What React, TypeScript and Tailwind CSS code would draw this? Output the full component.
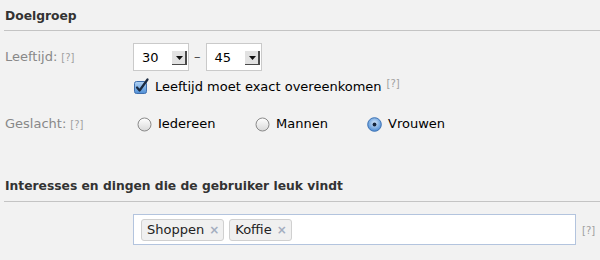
import React from 'react';

const font = { fontFamily: '"DejaVu Sans", "Liberation Sans", sans-serif' };

function Help({ className = '' }: { className?: string }) {
  return <span className={`text-[10px] text-[#a0a0a0] ${className}`}>[?]</span>;
}

function Select({ value }: { value: string }) {
  return (
    <div className="flex items-center w-[56px] h-[28px] bg-white border border-[#cacaca] pl-[8px] pr-[1px]">
      <span className="flex-1 text-[13px] leading-none text-black">{value}</span>
      <div className="relative w-[15px] h-[14px] bg-[#e2e2e2] border-r-2 border-b border-[#4a4a4a] mt-[1px]">
        <svg className="absolute left-[4px] top-[5px]" width="7" height="4" viewBox="0 0 7 4">
          <path d="M0 0h7L3.5 4z" fill="#111" />
        </svg>
      </div>
    </div>
  );
}

function Checkbox() {
  return (
    <svg width="15" height="16" viewBox="0 0 15 16">
      <defs>
        <linearGradient id="cb" x1="0" y1="0" x2="0" y2="1">
          <stop offset="0" stopColor="#b3d4f5" />
          <stop offset="1" stopColor="#4f8fd6" />
        </linearGradient>
      </defs>
      <rect x="0.5" y="3.5" width="12" height="12" rx="2" fill="url(#cb)" stroke="#3f6fae" />
      <path d="M3 9.5l2.6 3L13.5 1.5" fill="none" stroke="#1b2a40" strokeWidth="2.2" strokeLinecap="round" strokeLinejoin="round" />
    </svg>
  );
}

function Radio({ checked }: { checked?: boolean }) {
  if (checked) {
    return (
      <svg width="15" height="15" viewBox="0 0 15 15">
        <defs>
          <radialGradient id="rb" cx="0.5" cy="0.4" r="0.6">
            <stop offset="0" stopColor="#d6e9fb" />
            <stop offset="1" stopColor="#4a8ad3" />
          </radialGradient>
        </defs>
        <circle cx="7.5" cy="7.5" r="6.8" fill="url(#rb)" stroke="#3d72b4" />
        <circle cx="7.5" cy="7.5" r="1.9" fill="#15253c" />
      </svg>
    );
  }
  return (
    <svg width="15" height="15" viewBox="0 0 15 15">
      <defs>
        <linearGradient id="rg" x1="0" y1="0" x2="0" y2="1">
          <stop offset="0" stopColor="#ffffff" />
          <stop offset="1" stopColor="#d8d8d8" />
        </linearGradient>
      </defs>
      <circle cx="7.5" cy="7.5" r="6.5" fill="url(#rg)" stroke="#8a8a8a" />
    </svg>
  );
}

function Tag({ label }: { label: string }) {
  return (
    <span className="flex items-center h-[22px] pl-[5px] pr-[4px] gap-[5px] bg-[#f0f0f0] border border-[#d0d0d0] rounded-[3px] text-[13px] text-[#222]">
      {label}
      <span className="text-[12px] font-bold text-[#a3adbf]">×</span>
    </span>
  );
}

export default function App() {
  return (
    <div className="w-[600px] h-[260px] bg-[#f2f2f2] overflow-hidden" style={font}>
      <div className="h-[30px] pl-[5px] pt-[7px] text-[12.3px] leading-[18px] font-bold text-[#333]">Doelgroep</div>
      <div className="ml-[4px] h-px bg-[#c4c4c4]" />

      <div className="flex mt-[12px]">
        <div className="w-[133px] pl-[5px] h-[28px] flex items-center gap-[4px] text-[13px] text-[#888]">
          Leeftijd: <Help />
        </div>
        <div className="flex flex-col">
          <div className="flex items-center gap-[4px]">
            <Select value="30" />
            <span className="text-[13px] text-[#444] px-[1px]">–</span>
            <Select value="45" />
          </div>
          <div className="flex items-center h-[18px] mt-[6px] gap-[6px] pl-[1px]">
            <Checkbox />
            <span className="text-[13px] leading-none text-black">Leeftijd moet exact overeenkomen</span>
            <Help className="ml-[-1px] mb-[6px]" />
          </div>
        </div>
      </div>

      <div className="flex items-center h-[18px] mt-[20px]">
        <div className="w-[137px] pl-[5px] flex items-center gap-[4px] text-[13px] text-[#888]">
          Geslacht: <Help />
        </div>
        <div className="flex items-center gap-[6px] w-[118px]">
          <Radio />
          <span className="text-[13px] text-black">Iedereen</span>
        </div>
        <div className="flex items-center gap-[6px] w-[112px]">
          <Radio />
          <span className="text-[13px] text-black">Mannen</span>
        </div>
        <div className="flex items-center gap-[6px]">
          <Radio checked />
          <span className="text-[13px] text-black">Vrouwen</span>
        </div>
      </div>

      <div className="pl-[5px] mt-[43px] h-[20px] leading-[20px] mb-[5px] text-[12.3px] font-bold text-[#333]">
        Interesses en dingen die de gebruiker leuk vindt
      </div>
      <div className="ml-[4px] h-px bg-[#c4c4c4]" />

      <div className="flex items-center mt-[12px]">
        <div className="ml-[133px] w-[443px] h-[31px] bg-white border border-[#b3c4de] flex items-center gap-[5px] px-[7px]">
          <Tag label="Shoppen" />
          <Tag label="Koffie" />
        </div>
        <Help className="ml-[6px] mt-[2px]" />
      </div>
    </div>
  );
}
